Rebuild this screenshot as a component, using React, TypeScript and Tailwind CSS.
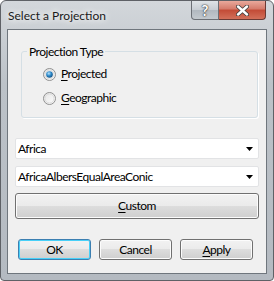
import React from 'react';

const font = "font-['Segoe_UI','Lato','Liberation_Sans',sans-serif]";

function Radio({ checked, label, mnemonic }: { checked: boolean; label: string; mnemonic: string }) {
  return (
    <div className="flex items-center gap-[5px] h-[14px]">
      <svg width="13" height="13" viewBox="0 0 13 13">
        <defs>
          <linearGradient id="rbg" x1="0" y1="0" x2="1" y2="1">
            <stop offset="0" stopColor="#e4e4e4" />
            <stop offset="1" stopColor="#fdfdfd" />
          </linearGradient>
          <radialGradient id="rdot" cx="0.4" cy="0.35" r="0.7">
            <stop offset="0" stopColor="#b6e2fb" />
            <stop offset="0.5" stopColor="#2d8acb" />
            <stop offset="1" stopColor="#124d7c" />
          </radialGradient>
        </defs>
        <circle cx="6.5" cy="6.5" r="6" fill="url(#rbg)" stroke="#8f8f8f" />
        <circle cx="6.5" cy="6.5" r="4.5" fill="none" stroke="#dcdcdc" />
        {checked && <circle cx="6.5" cy="6.5" r="3.3" fill="url(#rdot)" />}
      </svg>
      <span>
        <span className="underline underline-offset-2">{mnemonic}</span>
        {label}
      </span>
    </div>
  );
}

function Combo({ value }: { value: string }) {
  return (
    <div className="h-[21px] flex items-center justify-between bg-white border border-[#e2e3e5] rounded-[2px] pl-[2px] pr-[5px]">
      <span>{value}</span>
      <svg width="7" height="4" viewBox="0 0 7 4">
        <path d="M0 0h7L3.5 4z" fill="#000" />
      </svg>
    </div>
  );
}

function Btn({ children, primary }: { children: React.ReactNode; primary?: boolean }) {
  return (
    <button
      className={
        'w-[73px] h-[21px] rounded-[3px] border bg-[linear-gradient(#f2f2f2_0%,#ebebeb_48%,#dddddd_50%,#cfcfcf_100%)] ' +
        (primary ? 'border-[#3c7fb1] shadow-[inset_0_0_0_1px_#48d0f8]' : 'border-[#707070] shadow-[inset_0_0_0_1px_#fcfcfc]')
      }
    >
      {children}
    </button>
  );
}

export default function App() {
  return (
    <div className={`w-[274px] h-[281px] text-[12px] text-black ${font}`}>
      <div className="w-full h-full rounded-t-[6px] rounded-b-[4px] border border-[#5e6166] bg-[linear-gradient(#d3d7db,#bcc2c8_30%,#b4bac1)] flex flex-col px-[6px] pb-[6px]">
        <div className="h-[28px] flex items-start justify-between shrink-0">
          <span className="mt-[6px] ml-[1px] text-[12px] text-[#1a1a1a] [text-shadow:0_0_6px_#ffffff,0_0_10px_#ffffff]">
            Select a Projection
          </span>
          <div className="flex mr-[1px]">
            <div className="w-[28px] h-[19px] rounded-bl-[4px] border border-t-0 border-[#6b6f75] bg-[linear-gradient(#dfe3e7,#c7cdd3_50%,#b1b8bf_52%,#c3c9ce)] flex items-center justify-center text-white font-bold text-[15px] [text-shadow:0_0_2px_#333,0_0_1px_#000]">
              ?
            </div>
            <div className="w-[47px] h-[19px] rounded-br-[4px] border border-t-0 border-l-0 border-[#6b3a34] bg-[linear-gradient(#e9a99c,#d47a6a_45%,#c24b36_50%,#d2705a)] flex items-center justify-center">
              <svg width="13" height="11" viewBox="0 0 13 11">
                <path d="M2 1.5l9 8M11 1.5l-9 8" stroke="#3c3c3c" strokeWidth="4" strokeLinecap="round" />
                <path d="M2 1.5l9 8M11 1.5l-9 8" stroke="#ffffff" strokeWidth="2.4" strokeLinecap="round" />
              </svg>
            </div>
          </div>
        </div>
        <div className="flex-1 border border-[#6f767d] bg-[#f0f0f0] flex flex-col px-[7px] tracking-[-0.5px]">
          <fieldset className="mt-[14px] ml-[6px] mr-[1px] border border-[#d5dfe5] rounded-[3px] h-[74px] pl-[21px] pt-[8px] flex flex-col gap-[10px] shadow-[1px_1px_0_#fff]">
            <legend className="-ml-[16px] px-[2px] leading-[15px]">Projection Type</legend>
            <Radio checked mnemonic="P" label="rojected" />
            <Radio checked={false} mnemonic="G" label="eographic" />
          </fieldset>
          <div className="mt-[20px] flex flex-col gap-[7px]">
            <Combo value="Africa" />
            <Combo value="AfricaAlbersEqualAreaConic" />
          </div>
          <button className="mt-[6px] h-[26px] rounded-[3px] border border-[#707070] bg-[linear-gradient(#f2f2f2_0%,#ebebeb_48%,#dddddd_50%,#cfcfcf_100%)] shadow-[inset_0_0_0_1px_#fcfcfc]">
            <span className="underline underline-offset-2">C</span>ustom
          </button>
          <div className="mt-[20px] flex gap-[8px] pl-[3px]">
            <Btn primary>OK</Btn>
            <Btn>Cancel</Btn>
            <Btn>
              <span className="underline underline-offset-2">A</span>pply
            </Btn>
          </div>
        </div>
      </div>
    </div>
  );
}
